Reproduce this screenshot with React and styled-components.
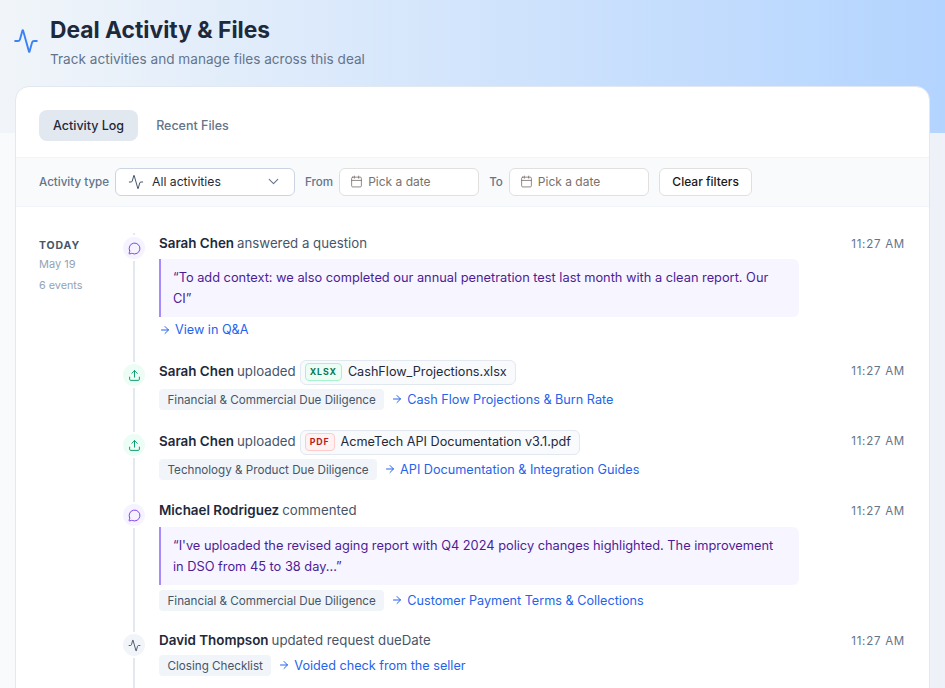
import React from "react";
import styled, { createGlobalStyle } from "styled-components";
import { Activity, Calendar, ChevronDown, MessageCircle, Upload, ArrowRight } from "lucide-react";

const Global = createGlobalStyle`
  html, body { margin: 0; height: 100%; overflow: hidden; }
  body { font-family: Inter, "Liberation Sans", sans-serif; background: linear-gradient(90deg, #f8fafc 0%, #eef2f8 100%); }
  * { box-sizing: border-box; }
`;

const Banner = styled.header`
  height: 133px;
  padding: 16px 15px 0 13px;
  display: flex;
  align-items: flex-start;
  gap: 11px;
  background: linear-gradient(90deg, #f1f5f9 0%, #b3d4ff 100%);
`;
const BannerIcon = styled.div`
  margin-top: 12px;
  width: 26px;
  height: 26px;
  color: #3b82f6;
`;
const BannerText = styled.div`
  display: flex;
  flex-direction: column;
`;
const Title = styled.h1`
  margin: 0;
  font-size: 22.8px;
  line-height: 28px;
  font-weight: 700;
  color: #1e293b;
`;
const Subtitle = styled.p`
  margin: 7px 0 0;
  font-size: 13.6px;
  line-height: 16px;
  color: #64748b;
`;
const Card = styled.main`
  margin: -47px 15px 0;
  height: 700px;
  background: #fff;
  border: 1px solid #e2e8f0;
  border-radius: 14px;
  overflow: hidden;
`;
const TabBar = styled.div`
  height: 71px;
  padding: 23px 23px 0;
  display: flex;
  gap: 4px;
  align-items: flex-start;
  border-bottom: 1px solid #f1f5f9;
`;
const Tab = styled.div`
  height: 31px;
  padding: 0 14px 1px;
  display: flex;
  align-items: center;
  font-size: 12.5px;
  font-weight: 500;
  border-radius: 8px;
  color: ${(p) => (p.$active ? "#1e293b" : "#64748b")};
  background: ${(p) => (p.$active ? "#e2e8f0" : "transparent")};
`;
const Filters = styled.div`
  height: 49px;
  padding: 0 23px;
  display: flex;
  align-items: center;
  background: #f8fafc;
  border-bottom: 1px solid #f1f5f9;
`;
const FilterLabel = styled.span`
  font-size: 11.6px;
  font-weight: 500;
  color: #64748b;
  margin-right: 6px;
`;
const Select = styled.div`
  width: 180px;
  height: 28px;
  padding: 0 12px 1px;
  margin-right: 10px;
  display: flex;
  align-items: center;
  gap: 8px;
  background: #fff;
  border: 1px solid #cbd5e1;
  border-radius: 6px;
  font-size: 12.2px;
  color: #1e293b;
  & > span { flex: 1; }
`;
const DateField = styled.div`
  width: 140px;
  height: 28px;
  padding: 0 10px 1px;
  margin-right: 10px;
  display: flex;
  align-items: center;
  gap: 5px;
  background: #fff;
  border: 1px solid #e2e0de;
  border-radius: 6px;
  font-size: 12px;
  color: #78716c;
`;
const ClearButton = styled.div`
  height: 28px;
  padding: 0 12.5px 1px;
  display: flex;
  align-items: center;
  background: #fff;
  border: 1px solid #e2e0de;
  border-radius: 6px;
  font-size: 12px;
  font-weight: 500;
  color: #1c1917;
`;
const Timeline = styled.section`
  padding: 26px 24px 0 23px;
  display: grid;
  grid-template-columns: 84px 1fr;
`;
const DayColumn = styled.div`
  padding-top: 7px;
  display: flex;
  flex-direction: column;
`;
const DayName = styled.div`
  font-size: 10.5px;
  line-height: 12px;
  font-weight: 700;
  letter-spacing: 0.9px;
  color: #475569;
`;
const DayDate = styled.div`
  margin-top: 6px;
  font-size: 11px;
  line-height: 12px;
  color: #94a3b8;
`;
const DayCount = styled.div`
  margin-top: 10px;
  font-size: 10.8px;
  line-height: 12px;
  color: #94a3b8;
`;
const Events = styled.div`
  display: flex;
  flex-direction: column;
`;
const Stub = styled.div`
  width: 2px;
  height: 2px;
  margin: 0 0 2px 10px;
  background: #e2e8f0;
`;
const Event = styled.article`
  height: ${(p) => p.$h}px;
  display: grid;
  grid-template-columns: 22px 1fr auto;
  column-gap: 14px;
`;
const Rail = styled.div`
  display: flex;
  flex-direction: column;
  align-items: center;
`;
const Line = styled.div`
  flex: 1;
  width: 2px;
  margin: 2px 0;
  background: #e2e8f0;
`;
const tones = {
  purple: ["#f5f3ff", "#7c3aed"],
  green: ["#ecfdf5", "#059669"],
  slate: ["#f1f5f9", "#475569"],
};
const Dot = styled.div`
  width: 22px;
  height: 22px;
  flex: none;
  border-radius: 50%;
  display: flex;
  align-items: center;
  justify-content: center;
  background: ${(p) => tones[p.$tone][0]};
  color: ${(p) => tones[p.$tone][1]};
`;
const Body = styled.div`
  min-width: 0;
  display: flex;
  flex-direction: column;
  align-items: flex-start;
`;
const Headline = styled.div`
  display: flex;
  align-items: center;
  gap: 3px;
  height: ${(p) => (p.$file ? 14 : 12)}px;
  font-size: 13.25px;
  line-height: 12px;
  color: #475569;
  & b { font-size: 13.4px; font-weight: 600; color: #1e293b; }
`;
const Time = styled.time`
  padding-top: 1px;
  font-size: 11.5px;
  line-height: 12px;
  letter-spacing: 0.75px;
  color: #64748b;
`;
const Quote = styled.blockquote`
  margin: ${(p) => p.$mt}px 0 0;
  width: 640px;
  padding: 8px 12px;
  background: #f7f5ff;
  border-left: 2px solid #a78bfa;
  border-radius: 0 6px 6px 0;
  font-size: 12.8px;
  line-height: 21px;
  color: #4c1d95;
`;
const Meta = styled.div`
  margin-top: ${(p) => p.$mt}px;
  display: flex;
  align-items: center;
  gap: 7px;
`;
const Tag = styled.span`
  height: 21px;
  padding: 0 8.5px;
  display: flex;
  align-items: center;
  background: #f1f5f9;
  border-radius: 4px;
  font-size: 11.65px;
  font-weight: 400;
  color: #475569;
`;
const RequestLink = styled.a`
  display: flex;
  align-items: center;
  gap: 4px;
  margin-top: -1px;
  font-size: 12.65px;
  font-weight: 400;
  color: #2563eb;
  line-height: 15px;
`;
const FileChip = styled.span`
  height: 25px;
  margin-left: 1px;
  padding: 0 8px 0 4px;
  display: flex;
  align-items: center;
  gap: 6px;
  background: #f8fafc;
  border: 1px solid #e2e8f0;
  border-radius: 6px;
  font-size: 12.65px;
  font-weight: 400;
  color: #1e293b;
  position: relative;
  top: 1px;
`;
const kinds = {
  xlsx: ["#ecfdf5", "#a7f3d0", "#047857"],
  pdf: ["#fef2f2", "#fecaca", "#b91c1c"],
};
const Kind = styled.span`
  height: 18px;
  padding: 0 4px;
  display: flex;
  align-items: center;
  background: ${(p) => kinds[p.$k][0]};
  border: 1px solid ${(p) => kinds[p.$k][1]};
  color: ${(p) => kinds[p.$k][2]};
  border-radius: 4px;
  font-size: 8.8px;
  font-weight: 700;
  letter-spacing: 0.9px;
`;

const Go = ({ children }) => (
  <RequestLink>
    <ArrowRight size={12} strokeWidth={2} />
    {children}
  </RequestLink>
);

const File = ({ k, name }) => (
  <FileChip>
    <Kind $k={k}>{k.toUpperCase()}</Kind>
    {name}
  </FileChip>
);

const Row = ({ h, tone, icon: Icon, children }) => (
  <Event $h={h}>
    <Rail>
      <Dot $tone={tone}>
        <Icon size={13} strokeWidth={1.75} />
      </Dot>
      <Line />
    </Rail>
    <Body>{children}</Body>
    <Time>11:27 AM</Time>
  </Event>
);

export default function App() {
  return (
    <>
      <Global />
      <Banner>
        <BannerIcon>
          <Activity size={26} strokeWidth={1.75} />
        </BannerIcon>
        <BannerText>
          <Title>Deal Activity &amp; Files</Title>
          <Subtitle>Track activities and manage files across this deal</Subtitle>
        </BannerText>
      </Banner>
      <Card>
        <TabBar>
          <Tab $active>Activity Log</Tab>
          <Tab>Recent Files</Tab>
        </TabBar>
        <Filters>
          <FilterLabel>Activity type</FilterLabel>
          <Select>
            <Activity size={16} strokeWidth={1.5} color="#475569" />
            <span>All activities</span>
            <ChevronDown size={17} strokeWidth={1.5} color="#64748b" />
          </Select>
          <FilterLabel>From</FilterLabel>
          <DateField>
            <Calendar size={13} strokeWidth={1.5} />
            Pick a date
          </DateField>
          <FilterLabel>To</FilterLabel>
          <DateField>
            <Calendar size={13} strokeWidth={1.5} />
            Pick a date
          </DateField>
          <ClearButton>Clear filters</ClearButton>
        </Filters>
        <Timeline>
          <DayColumn>
            <DayName>TODAY</DayName>
            <DayDate>May 19</DayDate>
            <DayCount>6 events</DayCount>
          </DayColumn>
          <Events>
            <Stub />
            <Row h={127} tone="purple" icon={MessageCircle}>
              <Headline><b>Sarah Chen</b> answered a question</Headline>
              <Quote $mt={10}>“To add context: we also completed our annual penetration test last month with a clean report. Our CI”</Quote>
              <Meta $mt={6}><Go>View in Q&amp;A</Go></Meta>
            </Row>
            <Row h={70} tone="green" icon={Upload}>
              <Headline $file><b>Sarah Chen</b> uploaded <File k="xlsx" name="CashFlow_Projections.xlsx" /></Headline>
              <Meta $mt={11}><Tag>Financial &amp; Commercial Due Diligence</Tag><Go>Cash Flow Projections &amp; Burn Rate</Go></Meta>
            </Row>
            <Row h={70} tone="green" icon={Upload}>
              <Headline $file><b>Sarah Chen</b> uploaded <File k="pdf" name="AcmeTech API Documentation v3.1.pdf" /></Headline>
              <Meta $mt={11}><Tag>Technology &amp; Product Due Diligence</Tag><Go>API Documentation &amp; Integration Guides</Go></Meta>
            </Row>
            <Row h={130} tone="purple" icon={MessageCircle}>
              <Headline><b>Michael Rodriguez</b> commented</Headline>
              <Quote $mt={11}>“I've uploaded the revised aging report with Q4 2024 policy changes highlighted. The improvement in DSO from 45 to 38 day...”</Quote>
              <Meta $mt={5}><Tag>Financial &amp; Commercial Due Diligence</Tag><Go>Customer Payment Terms &amp; Collections</Go></Meta>
            </Row>
            <Row h={100} tone="slate" icon={Activity}>
              <Headline><b>David Thompson</b> updated request dueDate</Headline>
              <Meta $mt={9}><Tag>Closing Checklist</Tag><Go>Voided check from the seller</Go></Meta>
            </Row>
          </Events>
        </Timeline>
      </Card>
    </>
  );
}
